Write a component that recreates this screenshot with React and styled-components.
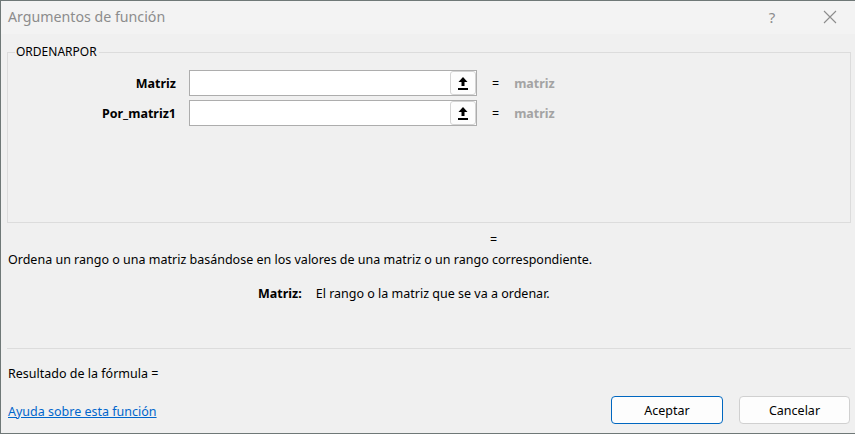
import React from "react";
import styled, { createGlobalStyle } from "styled-components";

const Global = createGlobalStyle`
  html, body { margin: 0; padding: 0; background: #f0f0f0; }
  body { font-family: "Noto Sans", "Open Sans", sans-serif; }
  * { box-sizing: border-box; }
`;

const Dialog = styled.div`
  width: 855px;
  height: 434px;
  background: #f0f0f0;
  border-left: 1px solid #6f7877;
  border-top: 1px solid #6f7877;
  border-bottom: 1px solid #6f7877;
  display: flex;
  flex-direction: column;
  color: #000;
  font-size: 12.5px;
`;

const TitleBar = styled.div`
  height: 33px;
  background: #f3f3f3;
  display: flex;
  align-items: center;
  padding-left: 7px;
`;

const Title = styled.div`
  flex: 1;
  font-size: 14.2px;
  color: #8c8c8c;
  margin-top: -2px;
`;

const TitleIcon = styled.div`
  width: 58px;
  height: 33px;
  display: flex;
  align-items: center;
  justify-content: center;
  color: #8c8c8c;
  font-size: 15px;
  margin-top: -2px;
`;

const TitleIcons = styled.div`
  display: flex;
  margin-right: -4px;
`;

const Body = styled.div`
  flex: 1;
  display: flex;
  flex-direction: column;
  padding: 0 4px 0 6px;
`;

const Group = styled.fieldset`
  margin: 11px 0 0 0;
  padding: 0;
  height: 178px;
  border: 1px solid #dcdcdc;
  min-width: 0;
`;

const Legend = styled.legend`
  margin-left: 7px;
  padding: 0 2px 0 1px;
  font-size: 12px;
  line-height: 14px;
  color: #000;
`;

const Rows = styled.div`
  display: grid;
  grid-template-columns: 168px 288px auto;
  column-gap: 13px;
  row-gap: 4px;
  margin-top: 11px;
  align-items: center;
`;

const Label = styled.div`
  text-align: right;
  font-weight: 700;
  font-size: 12.5px;
`;

const InputBox = styled.div`
  height: 26px;
  background: #fff;
  border: 1px solid #adadad;
  display: flex;
  justify-content: flex-end;
  align-items: center;
`;

const RefButton = styled.div`
  width: 26px;
  height: 24px;
  border: 1px solid #d4d4d4;
  border-radius: 3px;
  background: #fdfdfd;
  display: flex;
  align-items: center;
  justify-content: center;
`;

const Value = styled.div`
  display: flex;
  align-items: center;
  gap: 15px;
  margin-left: 2px;
`;

const Eq = styled.span`
  color: #000;
`;

const Hint = styled.span`
  color: #a3a3a3;
  font-weight: 700;
`;

const ResultEq = styled.div`
  margin-top: 9px;
  padding-left: 483px;
  line-height: 16px;
`;

const Description = styled.div`
  margin-top: 4px;
  padding-left: 1px;
  line-height: 16px;
`;

const ArgHelp = styled.div`
  margin-top: 18px;
  display: flex;
  gap: 14px;
  padding-left: 251px;
  line-height: 16px;
`;

const ArgName = styled.span`
  font-weight: 700;
`;

const Separator = styled.div`
  margin-top: 46px;
  height: 1px;
  background: #dcdcdc;
`;

const Result = styled.div`
  margin-top: 17px;
  padding-left: 1px;
  line-height: 16px;
`;

const Footer = styled.div`
  margin-top: 14px;
  display: flex;
  align-items: center;
`;

const Link = styled.a`
  flex: 1;
  color: #0066cc;
  text-decoration: underline;
  padding-left: 1px;
  margin-top: 2px;
  cursor: pointer;
`;

const Button = styled.button`
  width: ${(p) => (p.$primary ? "112px" : "111px")};
  height: 28px;
  margin-left: ${(p) => (p.$gap ? "16px" : "0")};
  margin-right: ${(p) => (p.$gap ? "1px" : "0")};
  background: #fdfdfd;
  border: 1px solid ${(p) => (p.$primary ? "#0067c0" : "#d0d0d0")};
  border-radius: 4px;
  font-family: inherit;
  font-size: 12.5px;
  color: #000;
`;

const UploadIcon = () => (
  <svg width="10" height="13" viewBox="0 0 10 13">
    <polygon points="5,0 0.5,5 9.5,5" fill="#000" />
    <rect x="3.5" y="4.5" width="3" height="4.5" fill="#000" />
    <rect x="0" y="11" width="10" height="2" fill="#000" />
  </svg>
);

const CloseIcon = () => (
  <svg width="14" height="14" viewBox="0 0 14 14">
    <path d="M1 1 L13 13 M13 1 L1 13" stroke="#8c8c8c" strokeWidth="1.1" />
  </svg>
);

const args = [
  { name: "Matriz", hint: "matriz" },
  { name: "Por_matriz1", hint: "matriz" },
];

export default function App() {
  return (
    <>
      <Global />
      <Dialog>
        <TitleBar>
          <Title>Argumentos de función</Title>
          <TitleIcons>
            <TitleIcon>?</TitleIcon>
            <TitleIcon>
              <CloseIcon />
            </TitleIcon>
          </TitleIcons>
        </TitleBar>
        <Body>
          <Group>
            <Legend>ORDENARPOR</Legend>
            <Rows>
              {args.map((a) => (
                <React.Fragment key={a.name}>
                  <Label>{a.name}</Label>
                  <InputBox>
                    <RefButton>
                      <UploadIcon />
                    </RefButton>
                  </InputBox>
                  <Value>
                    <Eq>=</Eq>
                    <Hint>{a.hint}</Hint>
                  </Value>
                </React.Fragment>
              ))}
            </Rows>
          </Group>
          <ResultEq>=</ResultEq>
          <Description>
            Ordena un rango o una matriz basándose en los valores de una matriz o un rango correspondiente.
          </Description>
          <ArgHelp>
            <ArgName>Matriz:</ArgName>
            <span>El rango o la matriz que se va a ordenar.</span>
          </ArgHelp>
          <Separator />
          <Result>Resultado de la fórmula =</Result>
          <Footer>
            <Link>Ayuda sobre esta función</Link>
            <Button $primary>Aceptar</Button>
            <Button $gap>Cancelar</Button>
          </Footer>
        </Body>
      </Dialog>
    </>
  );
}
